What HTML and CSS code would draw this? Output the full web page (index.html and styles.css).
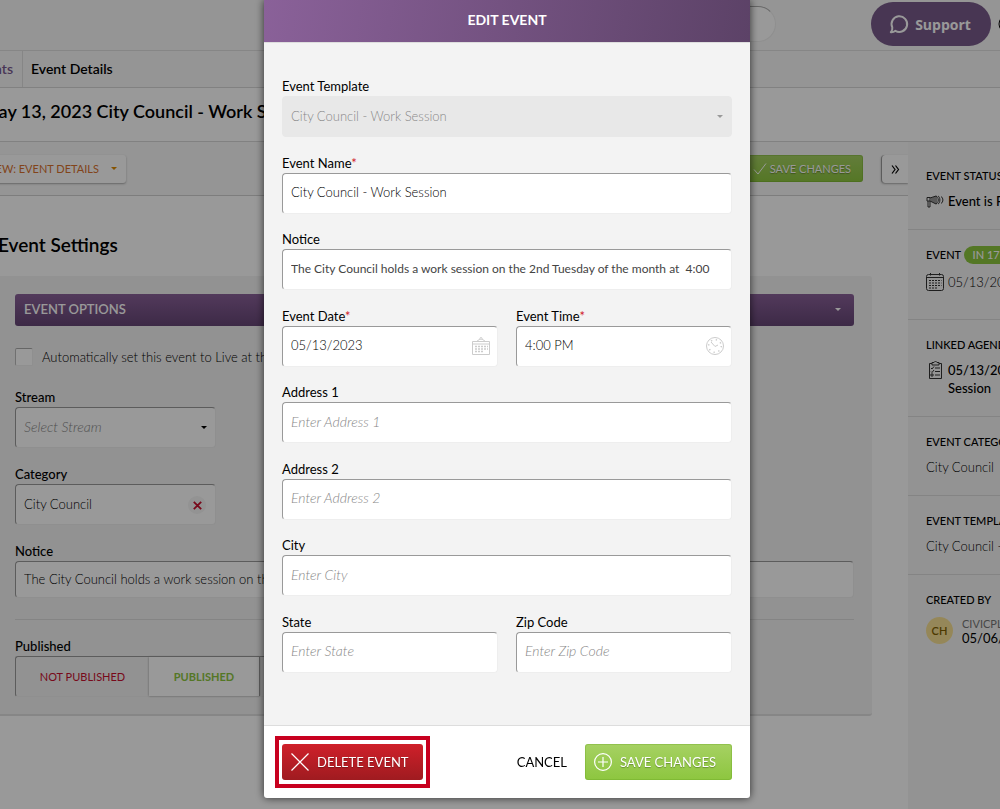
FILE: index.html
```html
<!DOCTYPE html>
<html lang="en">
<head>
  <meta charset="UTF-8">
  <title>Edit Event</title>
  <meta name="viewport" content="width=device-width, initial-scale=1">
  <link rel="stylesheet" href="styles.css">
</head>
<body>
  <div class="page">
    <header class="topbar">
      <input type="search" class="search" aria-label="Search">
      <button class="support">
        <svg width="20" height="20" viewBox="0 0 20 20" fill="none" stroke="currentColor" stroke-width="2"><path d="M3.3 13.4A7.8 7.8 0 1 1 6.4 16.8C5.3 17.7 3.8 18.4 1.8 18.2C3 17 3.6 15.6 3.3 13.4Z" stroke-linejoin="round"/></svg>
        Support
      </button>
      <svg class="help" width="20" height="20" viewBox="0 0 20 20" fill="none" stroke="currentColor"><circle cx="10" cy="10" r="9"/></svg>
    </header>

    <nav class="crumbs">
      <a href="#">Events</a>
      <span>Event Details</span>
    </nav>

    <div class="title-row">
      <h1>May 13, 2023 City Council - Work Session</h1>
    </div>

    <div class="columns">
      <main>
        <div class="toolbar">
          <button class="view-btn">VIEW: EVENT DETAILS <i class="caret"></i></button>
          <button class="btn green small">
            <svg width="14" height="14" viewBox="0 0 14 14" fill="none" stroke="currentColor"><path d="M1 7.5L5 12L13 1.5"/></svg>
            SAVE CHANGES
          </button>
          <button class="collapse" aria-label="Collapse">
            <svg width="9" height="9" viewBox="0 0 9 9" fill="none" stroke="currentColor" stroke-width="1.2"><path d="M1 .5L4 4.500L1 8.500M4.500 .5L7.500 4.500L4.500 8.500"/></svg>
          </button>
        </div>

        <section class="settings">
          <h2>Event Settings</h2>
          <div class="panel">
            <button class="panel-bar">EVENT OPTIONS <i class="caret"></i></button>
            <label class="check"><input type="checkbox"> Automatically set this event to Live at the</label>

            <div class="field short">
              <label for="stream">Stream</label>
              <div class="control">
                <select id="stream" class="placeholder"><option>Select Stream</option></select>
                <i class="caret"></i>
              </div>
            </div>
            <div class="field short">
              <label for="category">Category</label>
              <div class="control">
                <input type="text" id="category" value="City Council">
                <button class="clear" aria-label="Clear">
                  <svg width="9" height="9" viewBox="0 0 9 9" stroke="currentColor" stroke-width="1.8"><path d="M.8 .8L8.200 8.200M8.200 .8L.8 8.200"/></svg>
                </button>
              </div>
            </div>
            <div class="field slim">
              <label for="pageNotice">Notice</label>
              <input type="text" id="pageNotice" value="The City Council holds a work session on the">
            </div>
            <hr>
            <div class="field">
              <span class="label">Published</span>
              <div class="toggle">
                <button class="no">NOT PUBLISHED</button>
                <button class="yes">PUBLISHED</button>
              </div>
            </div>
          </div>
        </section>
      </main>

      <aside>
        <section class="status">
          <h3>EVENT STATUS</h3>
          <div class="row medium">
            <svg width="18" height="18" viewBox="0 0 18 18" fill="none" stroke="currentColor"><path d="M1 5.500H4V9H1ZM4 6L10 4V12L4 9M2 9V15H4V9M6 5.500V10M8 5V11M10 4C13 5 13 11 10 12M12 4C14.500 5 14.500 11 12 12M15 4.500C17.500 6 17.500 10 15 11.500"/></svg>
            Event is Published
          </div>
        </section>
        <section class="when">
          <h3>EVENT <span class="pill">IN 17 DAYS</span></h3>
          <div class="row">
            <svg width="18" height="18" viewBox="0 0 18 18" fill="none" stroke="currentColor"><rect x=".5" y="1.500" width="17" height="16" rx="2"/><path d="M.5 4.500H17.500M4.500 0V2.500M13.500 0V2.500"/><path d="M3 7.500H15.500M3 10H15.500M3 12.500H15.500M3 15H12" stroke-dasharray="2 1"/></svg>
            05/13/2023
          </div>
        </section>
        <section>
          <h3>LINKED AGENDA</h3>
          <div class="row medium">
            <svg width="18" height="18" viewBox="0 0 18 18" fill="none" stroke="currentColor"><path d="M6 2.500H3.500V17.500H15.500V2.500H13M6 1.500H8C8.500 0 10.500 0 11 1.500H13V4H6ZM9 7H14M9 10.500H14M9 14H14M5 7L6 8L8 5.500M5 10.500L6 11.500L8 9M5 13H7V15H5Z"/></svg>
            <span>05/13/2023<br>Session</span>
          </div>
        </section>
        <section>
          <h3>EVENT CATEGORY</h3>
          <div class="row">City Council</div>
        </section>
        <section>
          <h3>EVENT TEMPLATE</h3>
          <div class="row">City Council - Work Session</div>
        </section>
        <section>
          <h3>CREATED BY</h3>
          <div class="author">
            <span class="avatar">CH</span>
            <div><span class="name">CIVICPLUS</span><br>05/06/2023</div>
          </div>
        </section>
      </aside>
    </div>
  </div>

  <div class="overlay">
    <form class="modal" role="dialog" aria-labelledby="modalTitle">
      <h2 id="modalTitle">EDIT EVENT</h2>
      <div class="modal-body">
        <div class="field wide">
          <label for="template">Event Template</label>
          <div class="control">
            <select id="template" disabled><option>City Council - Work Session</option></select>
            <i class="caret"></i>
          </div>
        </div>
        <div class="field wide">
          <label for="name">Event Name<em>*</em></label>
          <input type="text" id="name" value="City Council - Work Session">
        </div>
        <div class="field wide">
          <label for="notice">Notice</label>
          <input type="text" id="notice" class="long" value="The City Council holds a work session on the 2nd Tuesday of the month at  4:00">
        </div>
        <div class="field">
          <label for="date">Event Date<em>*</em></label>
          <div class="control">
            <input type="text" id="date" value="05/13/2023">
            <svg class="field-icon" width="18" height="18" viewBox="0 0 18 18" fill="none" stroke="currentColor"><path d="M.5 4.500H17.500V17.500H.5ZM.5 7H17.500M4.500 4.500L8 2M13.500 4.500L10 2"/><circle cx="9" cy="1.500" r="1"/><path d="M3 9.500H16M3 12H16M3 14.500H12" stroke-width="1.500" stroke-dasharray="2 1"/></svg>
          </div>
        </div>
        <div class="field">
          <label for="time">Event Time<em>*</em></label>
          <div class="control">
            <input type="text" id="time" value="4:00 PM">
            <svg class="field-icon" width="18" height="18" viewBox="0 0 18 18" fill="none" stroke="currentColor"><circle cx="9" cy="9" r="8.500"/><circle cx="9" cy="9" r="6.300" stroke-width="1.500" stroke-dasharray="1.300 3.650"/><path d="M5 5L9 9.500L12 8"/></svg>
          </div>
        </div>
        <div class="field wide">
          <label for="address1">Address 1</label>
          <input type="text" id="address1" placeholder="Enter Address 1">
        </div>
        <div class="field wide">
          <label for="address2">Address 2</label>
          <input type="text" id="address2" placeholder="Enter Address 2">
        </div>
        <div class="field wide">
          <label for="city">City</label>
          <input type="text" id="city" placeholder="Enter City">
        </div>
        <div class="field">
          <label for="state">State</label>
          <input type="text" id="state" placeholder="Enter State">
        </div>
        <div class="field">
          <label for="zip">Zip Code</label>
          <input type="text" id="zip" placeholder="Enter Zip Code">
        </div>
      </div>
      <footer>
        <div class="highlight">
          <button type="button" class="btn red">
            <svg width="18" height="18" viewBox="0 0 18 18" stroke="currentColor" stroke-width="1.200"><path d="M.5 .5L17.500 17.500M17.500 .5L.5 17.500"/></svg>
            DELETE EVENT
          </button>
        </div>
        <button type="button" class="cancel">CANCEL</button>
        <button type="button" class="btn green">
          <svg width="18" height="18" viewBox="0 0 18 18" fill="none" stroke="currentColor" stroke-width="1.200"><circle cx="9" cy="9" r="8.400"/><path d="M9 4V14M4 9H14"/></svg>
          SAVE CHANGES
        </button>
      </footer>
    </form>
  </div>
</body>
</html>
```
FILE: styles.css
```css
* {
  box-sizing: border-box;
}
body {
  margin: 0;
  height: 100vh;
  overflow: hidden;
  background: #fff;
  color: #000;
  font-family: Lato, sans-serif;
  font-size: 13px;
  font-weight: 400;
  line-height: 18px;
}
h1, h2, h3 {
  margin: 0;
}
button, input, select {
  font: inherit;
  color: inherit;
}
button {
  border: none;
  padding: 0;
  background: none;
  cursor: pointer;
}
svg {
  flex: none;
}
.caret {
  border: 3px solid transparent;
  border-top-color: currentColor;
  border-bottom: none;
}

/* page behind the dialog, wider than the window on both sides */
.page {
  display: flex;
  flex-direction: column;
  height: 100vh;
  margin: 0 -160px 0 -32px;
}
.topbar {
  display: flex;
  justify-content: flex-end;
  height: 51px;
  padding-right: 142px;
  background: #f8f8f8;
  border-bottom: 1px solid #e0e0e0;
}
.search {
  width: 300px;
  height: 36px;
  margin: 6px 95px 0 0;
  border: 1px solid #eee;
  border-top-color: #aaa;
  border-radius: 18px;
  background: #fff;
}
.support {
  display: flex;
  align-items: center;
  justify-content: center;
  gap: 6px;
  width: 120px;
  height: 44px;
  margin: 2px 7px 0 0;
  padding-right: 2px;
  border-radius: 22px;
  background: #785a8a;
  color: #fff;
  font: bold 14px "Open Sans", sans-serif;
}
.help {
  margin-top: 14px;
}
.crumbs {
  display: flex;
  height: 37px;
  border-bottom: 1px solid #d8d8d8;
  background: #f8f8f8;
  line-height: 36px;
  font-size: 14px;
  font-weight: 600;
}
.crumbs a {
  width: 55px;
  padding-right: 9px;
  border-right: 1px solid #e0e0e0;
  color: #795890;
  text-align: right;
  text-decoration: none;
}
.crumbs span {
  padding-left: 8px;
}
.title-row {
  height: 54px;
  padding-left: 14px;
  border-bottom: 1px solid #d8d8d8;
}
h1 {
  font-size: 18px;
  font-weight: 600;
  line-height: 46px;
}
.columns {
  display: flex;
  flex: 1;
}
main {
  flex: 1;
}
.toolbar {
  display: flex;
  align-items: center;
  height: 54px;
  padding-left: 14px;
  background: #f8f8f8;
  border-bottom: 1px solid #d0d0d0;
}
.view-btn {
  display: flex;
  align-items: center;
  gap: 12px;
  height: 28px;
  margin-right: auto;
  padding: 0 9px 0 3px;
  border-radius: 3px;
  background: #fff;
  box-shadow: 0 1px 2px #aaa;
  color: #d9722e;
  font-size: 11px;
}
.view-btn .caret {
  color: #e08a00;
}
.btn {
  display: flex;
  align-items: center;
  gap: 8px;
  height: 36px;
  padding: 0 14px 0 9px;
  border-radius: 3px;
  color: #fff;
  text-shadow: 0 1px 1px rgba(0, 0, 0, .3);
}
.green {
  padding-right: 16px;
  background: linear-gradient(#a6d163, #8dc63f);
  box-shadow: inset 0 0 0 1px rgba(100, 160, 30, .3);
}
.red {
  background: linear-gradient(#cf202a, #9f1b20);
}
.small {
  gap: 3px;
  height: 27px;
  padding: 0 12px;
  font-size: 11px;
}
.collapse {
  width: 27px;
  height: 28px;
  margin-left: 18px;
  border-left: 1px solid #999;
  border-radius: 4px 0 0 4px;
  background: #fff;
  box-shadow: 0 1px 2px #aaa;
}
.settings {
  padding: 38px 36px 0 29px;
}
.settings h2 {
  padding-left: 1px;
  font-size: 19px;
  font-weight: 600;
  line-height: 22px;
}
.panel {
  height: 440px;
  margin-top: 20px;
  padding: 18px 18px 0;
  border-radius: 3px;
  border-bottom: 2px solid #e0e0e0;
  background: #f3f3f3;
}
.panel-bar {
  display: flex;
  align-items: center;
  justify-content: space-between;
  width: 100%;
  height: 32px;
  padding: 0 13px 2px 9px;
  border-radius: 3px;
  background: linear-gradient(#8a6199, #664676);
  color: #fff;
  font-weight: 600;
}
.check {
  display: flex;
  align-items: center;
  gap: 9px;
  margin: 22px 0;
  font-weight: 300;
}

/* form fields */
.field > label,
.label {
  display: block;
  height: 19px;
  line-height: 18px;
}
.panel .field {
  margin-bottom: 17px;
}
.panel .field > label,
.label {
  font-weight: 500;
}
.short {
  width: 201px;
}
.control {
  position: relative;
}
input[type="text"],
select {
  display: block;
  width: 100%;
  height: 41px;
  padding: 0 9px 2px 8px;
  border: 1px solid #eee;
  border-top-color: #999;
  border-left-color: #999;
  border-radius: 4px;
  background: #fff;
  font-weight: 300;
  appearance: none;
}
input.long {
  color: #444;
  font-size: 12px;
  font-weight: 400;
}
select:disabled {
  border-color: #e8e8e8;
  background: #e8e8e8;
  color: #888;
  opacity: 1;
}
select:disabled + .caret {
  color: #999;
}
.control .caret {
  position: absolute;
  top: 19px;
  right: 9px;
}
.field-icon {
  position: absolute;
  top: 11px;
  right: 8px;
  color: #ccc;
}
input[type="checkbox"] {
  width: 18px;
  height: 18px;
  margin: 0;
  border: 1px solid #eee;
  border-top-color: #aaa;
  border-left-color: #bbb;
  border-radius: 2px;
  background: #fff;
  appearance: none;
}
select.placeholder,
::placeholder {
  color: #888;
  font-size: 14px;
  font-style: italic;
}
.clear {
  position: absolute;
  top: 12px;
  right: 10px;
  display: grid;
  place-items: center;
  width: 18px;
  height: 18px;
  border-radius: 50%;
  background: #f5f5f5;
  color: #c8102e;
}
.panel .slim input {
  height: 37px;
}
hr {
  margin: 21px 0 17px;
  border: none;
  border-top: 1px solid #ddd;
}
.toggle {
  display: flex;
  width: 400px;
  height: 41px;
  border: 1px solid #eee;
  border-top-color: #999;
  border-left-color: #999;
  border-radius: 3px;
}
.toggle button {
  font-size: 11px;
}
.toggle .no {
  width: 133px;
  color: #c8102e;
}
.toggle .yes {
  width: 111px;
  background: #fff;
  border-right: 1px solid #999;
  box-shadow: 0 0 2px #999;
  color: #8dc63f;
  font-weight: 700;
}

/* right column */
aside {
  width: 252px;
  background: #f6f6f6;
}
aside section {
  padding: 16px 18px 19px;
  border-bottom: 1px solid #ddd;
}
aside section:last-child {
  border-bottom: none;
}
aside svg {
  color: #333;
}
aside .status {
  padding-top: 25px;
}
aside .when {
  min-height: 90px;
}
.when h3 {
  margin-bottom: 9px;
}
h3 {
  margin-bottom: 7px;
  font-size: 11px;
  font-weight: 500;
  line-height: 18px;
}
.pill {
  display: inline-block;
  padding: 0 9px;
  border-radius: 9px;
  background: #8dc63f;
  color: #fff;
}
.row {
  display: flex;
  gap: 4px;
  font-weight: 300;
}
.medium {
  font-weight: 500;
}
.author {
  display: flex;
  align-items: center;
  gap: 9px;
  line-height: 14px;
}
.avatar {
  width: 27px;
  border-radius: 50%;
  background: #f9e294;
  color: #806000;
  font-size: 11px;
  font-weight: 600;
  line-height: 27px;
  text-align: center;
}
.name {
  color: #777;
  font-size: 11px;
}

/* dialog */
.overlay {
  position: fixed;
  inset: 0;
  display: flex;
  justify-content: center;
  padding: 0 0 11px 14px;
  background: rgba(0, 0, 0, .4);
}
.modal {
  display: flex;
  flex-direction: column;
  width: 486px;
  border-radius: 0 0 3px 3px;
  background: #fff;
  box-shadow: 0 0 8px rgba(0, 0, 0, .7);
}
.modal h2 {
  height: 42px;
  background: linear-gradient(100deg, #8a6199, #5c4267);
  color: #fff;
  font-size: 14px;
  font-weight: 700;
  line-height: 40px;
  text-align: center;
}
.modal-body {
  display: grid;
  grid-template-columns: 1fr 1fr;
  column-gap: 18px;
  align-content: space-between;
  flex: 1;
  padding: 34px 18px 52px;
  border-top: 1px solid #ddd;
  border-bottom: 1px solid #ddd;
  background: #f3f3f3;
}
.wide {
  grid-column: span 2;
}
em {
  color: #d0202a;
  font-style: normal;
}
.modal footer {
  display: flex;
  align-items: center;
  height: 72px;
  padding: 0 18px 0 11px;
}
.highlight {
  margin-right: auto;
  padding: 4px 3px;
  border: 4px solid #c8001f;
}
.cancel {
  margin-right: 18px;
}
```
